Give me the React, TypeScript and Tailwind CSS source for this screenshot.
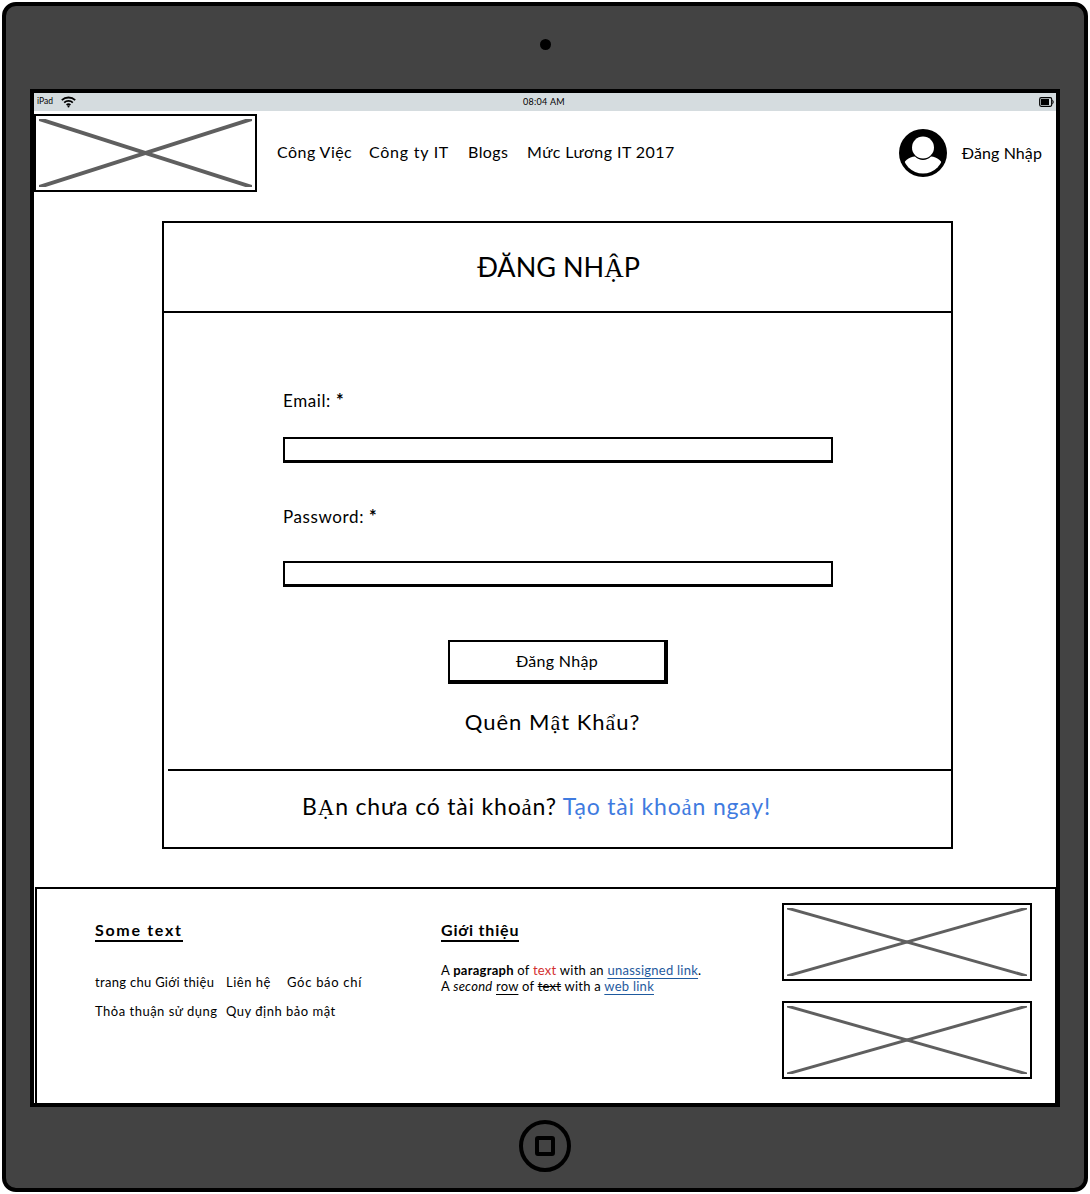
const font = "font-['Lato','Noto_Sans',sans-serif]";

// some vietnamese glyphs fall back to a serif face in the mockup
function G({ children }: { children: string }) {
  return <span className="font-['Liberation_Serif',serif]">{children}</span>;
}

function Placeholder({ className, stroke = 3 }: { className: string; stroke?: number }) {
  return (
    <div className={`border-2 border-black bg-white p-[3px] ${className}`}>
      <svg className="block h-full w-full" viewBox="0 0 100 100" preserveAspectRatio="none">
        <line x1="0" y1="0" x2="100" y2="100" stroke="#5f5f5f" strokeWidth={stroke} vectorEffect="non-scaling-stroke" />
        <line x1="100" y1="0" x2="0" y2="100" stroke="#5f5f5f" strokeWidth={stroke} vectorEffect="non-scaling-stroke" />
      </svg>
    </div>
  );
}

function StatusBar() {
  return (
    <div className="relative flex h-[18px] shrink-0 items-center justify-between bg-[#d5dcdf] pb-[1px] pl-[3px] pr-[2px] text-[9px] text-black">
      <div className="flex items-center gap-[8px]">
        <span className="text-[8.5px]">iPad</span>
        <svg width="15" height="12" viewBox="0 0 15 12" fill="none" stroke="black" strokeWidth="1.8">
          <path d="M0.8 4.2C4.5 0.6 10.5 0.6 14.2 4.2" />
          <path d="M3.2 6.6C5.6 4.4 9.4 4.4 11.8 6.6" />
          <path d="M5.6 9C6.6 8.2 8.4 8.2 9.4 9" />
          <circle cx="7.5" cy="10.6" r="1" fill="black" stroke="none" />
        </svg>
      </div>
      <span className="absolute left-[489px] tracking-[0.3px]">08:04 AM</span>
      <svg width="15" height="10" viewBox="0 0 15 10" fill="none">
        <rect x="0.7" y="0.7" width="12" height="8.6" rx="1.5" stroke="black" strokeWidth="1.2" />
        <rect x="2" y="2" width="8" height="6" fill="black" />
        <path d="M13.5 3.2C14.4 4 14.4 6 13.5 6.8" stroke="black" strokeWidth="1" />
      </svg>
    </div>
  );
}

function Avatar() {
  return (
    <svg width="48" height="48" viewBox="0 0 48 48">
      <defs>
        <clipPath id="avatarClip">
          <circle cx="24" cy="24" r="20.5" />
        </clipPath>
      </defs>
      <circle cx="24" cy="24" r="24" fill="black" />
      <circle cx="24" cy="18.5" r="11" fill="white" />
      <path d="M4 48V38C4 32 10 28 16 27.5C20 32 28 32 32 27.5C38 28 44 32 44 38V48Z" fill="white" clipPath="url(#avatarClip)" />
    </svg>
  );
}

function Header() {
  return (
    <header className="flex h-[81px] shrink-0 items-start">
      <Placeholder className="mt-[3px] h-[78px] w-[223px] shrink-0" stroke={4} />
      <nav className="ml-[20px] mt-[30px] flex text-[16px] leading-[22px] tracking-[0.45px] text-black">
        <span className="w-[92px]">Công Việc</span>
        <span className="w-[99px] tracking-[0.75px]">Công ty IT</span>
        <span className="w-[59px]">Blogs</span>
        <span>Mức Lương IT 2017</span>
      </nav>
      <div className="ml-auto mr-[14px] mt-[18px] flex items-center gap-[15px]">
        <Avatar />
        <span className="text-[16px] tracking-[0.1px] text-black">Đăng Nhập</span>
      </div>
    </header>
  );
}

function Field({ label, className, inputClass }: { label: string; className: string; inputClass: string }) {
  return (
    <div className={`flex flex-col ${className}`}>
      <label className="text-[17px] leading-[22px] tracking-[0.6px] text-black">
        {label} <span className="text-[18px] font-bold">*</span>
      </label>
      <input className={`h-[26px] w-[550px] border-2 border-b-[3px] border-black bg-white ${inputClass}`} />
    </div>
  );
}

function LoginCard() {
  return (
    <section className="ml-[128px] mt-[29px] flex h-[629px] w-[791px] flex-col border-2 border-black text-black">
      <div className="flex h-[90px] shrink-0 items-center justify-center border-b-2 border-black pt-[2px]">
        <h1 className="text-[27px] font-normal pl-[2px]">ĐĂNG NH<G>Ậ</G>P</h1>
      </div>
      <div className="flex flex-1 flex-col pl-[119px] pt-[76px]">
        <Field label="Email:" className="" inputClass="mt-[25px]" />
        <Field label="Password:" className="mt-[42px]" inputClass="mt-[33px]" />
        <button className="ml-[165px] mt-[53px] h-[44px] w-[220px] border-2 border-b-[4px] border-r-[4px] border-black bg-white text-[16px] tracking-[0.3px]">
          Đăng Nhập
        </button>
        <p className="ml-[-119px] mt-[22px] pr-[10px] text-center text-[22px] leading-[32px] tracking-[1px]">
          Quên M<G>ậ</G>t Kh<G>ẩ</G>u?
        </p>
      </div>
      <div className="ml-[4px] flex h-[78px] shrink-0 items-center justify-center border-t-2 border-black pb-[2px] pr-[46px] text-[23px] tracking-[0.8px]">
        <span>B<G>Ạ</G>n chưa có tài kho<G>ả</G>n?</span>
        <a className="ml-[6px] text-[#3f7be0]" href="#">Tạo tài kho<G>ả</G>n ngay!</a>
      </div>
    </section>
  );
}

function Footer() {
  return (
    <footer className="ml-[1px] mt-[38px] flex h-[217px] w-[1022px] border-2 border-b-0 border-black pl-[58px] text-black">
      <div className="w-[346px] pt-[29px]">
        <h2 className="inline-block border-b-2 border-black text-[16px] font-bold leading-[20px] tracking-[1.7px]">Some text</h2>
        <div className="mt-[30px] flex text-[13px] leading-[20px] tracking-[0.5px]">
          <span className="w-[131px] tracking-[0.3px]">trang chu Giới thiệu</span>
          <span className="w-[61px]">Liên hệ</span>
          <span className="tracking-[0.7px]">Góc báo chí</span>
        </div>
        <div className="mt-[9px] flex text-[13px] leading-[20px] tracking-[0.5px]">
          <span className="w-[131px]">Thỏa thuận sử dụng</span>
          <span>Quy định bảo mật</span>
        </div>
      </div>
      <div className="w-[341px] pt-[29px]">
        <h2 className="inline-block border-b-2 border-black text-[16px] font-bold leading-[20px] tracking-[0.8px]">Giới thiệu</h2>
        <p className="mt-[20px] text-[13px] leading-[16px] tracking-[0.25px]">
          A <b>paragraph</b> of <span className="text-[#d32f2f]">text</span> with an{" "}
          <a className="text-[#1f5a9e] underline underline-offset-[3px]" href="#">unassigned link</a>.
          <br />
          A <i>second</i> <u className="underline-offset-[3px]">row</u> of <s>text</s> with a{" "}
          <a className="text-[#1f5a9e] underline underline-offset-[3px]" href="#">web link</a>
        </p>
      </div>
      <div className="flex flex-col gap-[20px] pt-[14px]">
        <Placeholder className="h-[78px] w-[250px]" />
        <Placeholder className="h-[78px] w-[250px]" />
      </div>
    </footer>
  );
}

export default function App() {
  return (
    <div className={`h-[1194px] w-[1090px] bg-white p-[2px] ${font}`}>
      <div className="flex h-[1190px] w-[1086px] flex-col items-center rounded-[14px] border-4 border-black bg-[#434343]">
        <div className="flex h-[83px] shrink-0 items-center pb-[7px]">
          <div className="h-[11px] w-[11px] rounded-full bg-black" />
        </div>
        <div className="flex h-[1018px] w-[1030px] shrink-0 flex-col overflow-hidden border-4 border-black bg-white">
          <StatusBar />
          <Header />
          <LoginCard />
          <Footer />
        </div>
        <div className="flex flex-1 items-center justify-center pb-[4px]">
          <div className="flex h-[52px] w-[52px] items-center justify-center rounded-full border-4 border-black">
            <div className="h-[20px] w-[20px] rounded-[3px] border-4 border-black" />
          </div>
        </div>
      </div>
    </div>
  );
}
